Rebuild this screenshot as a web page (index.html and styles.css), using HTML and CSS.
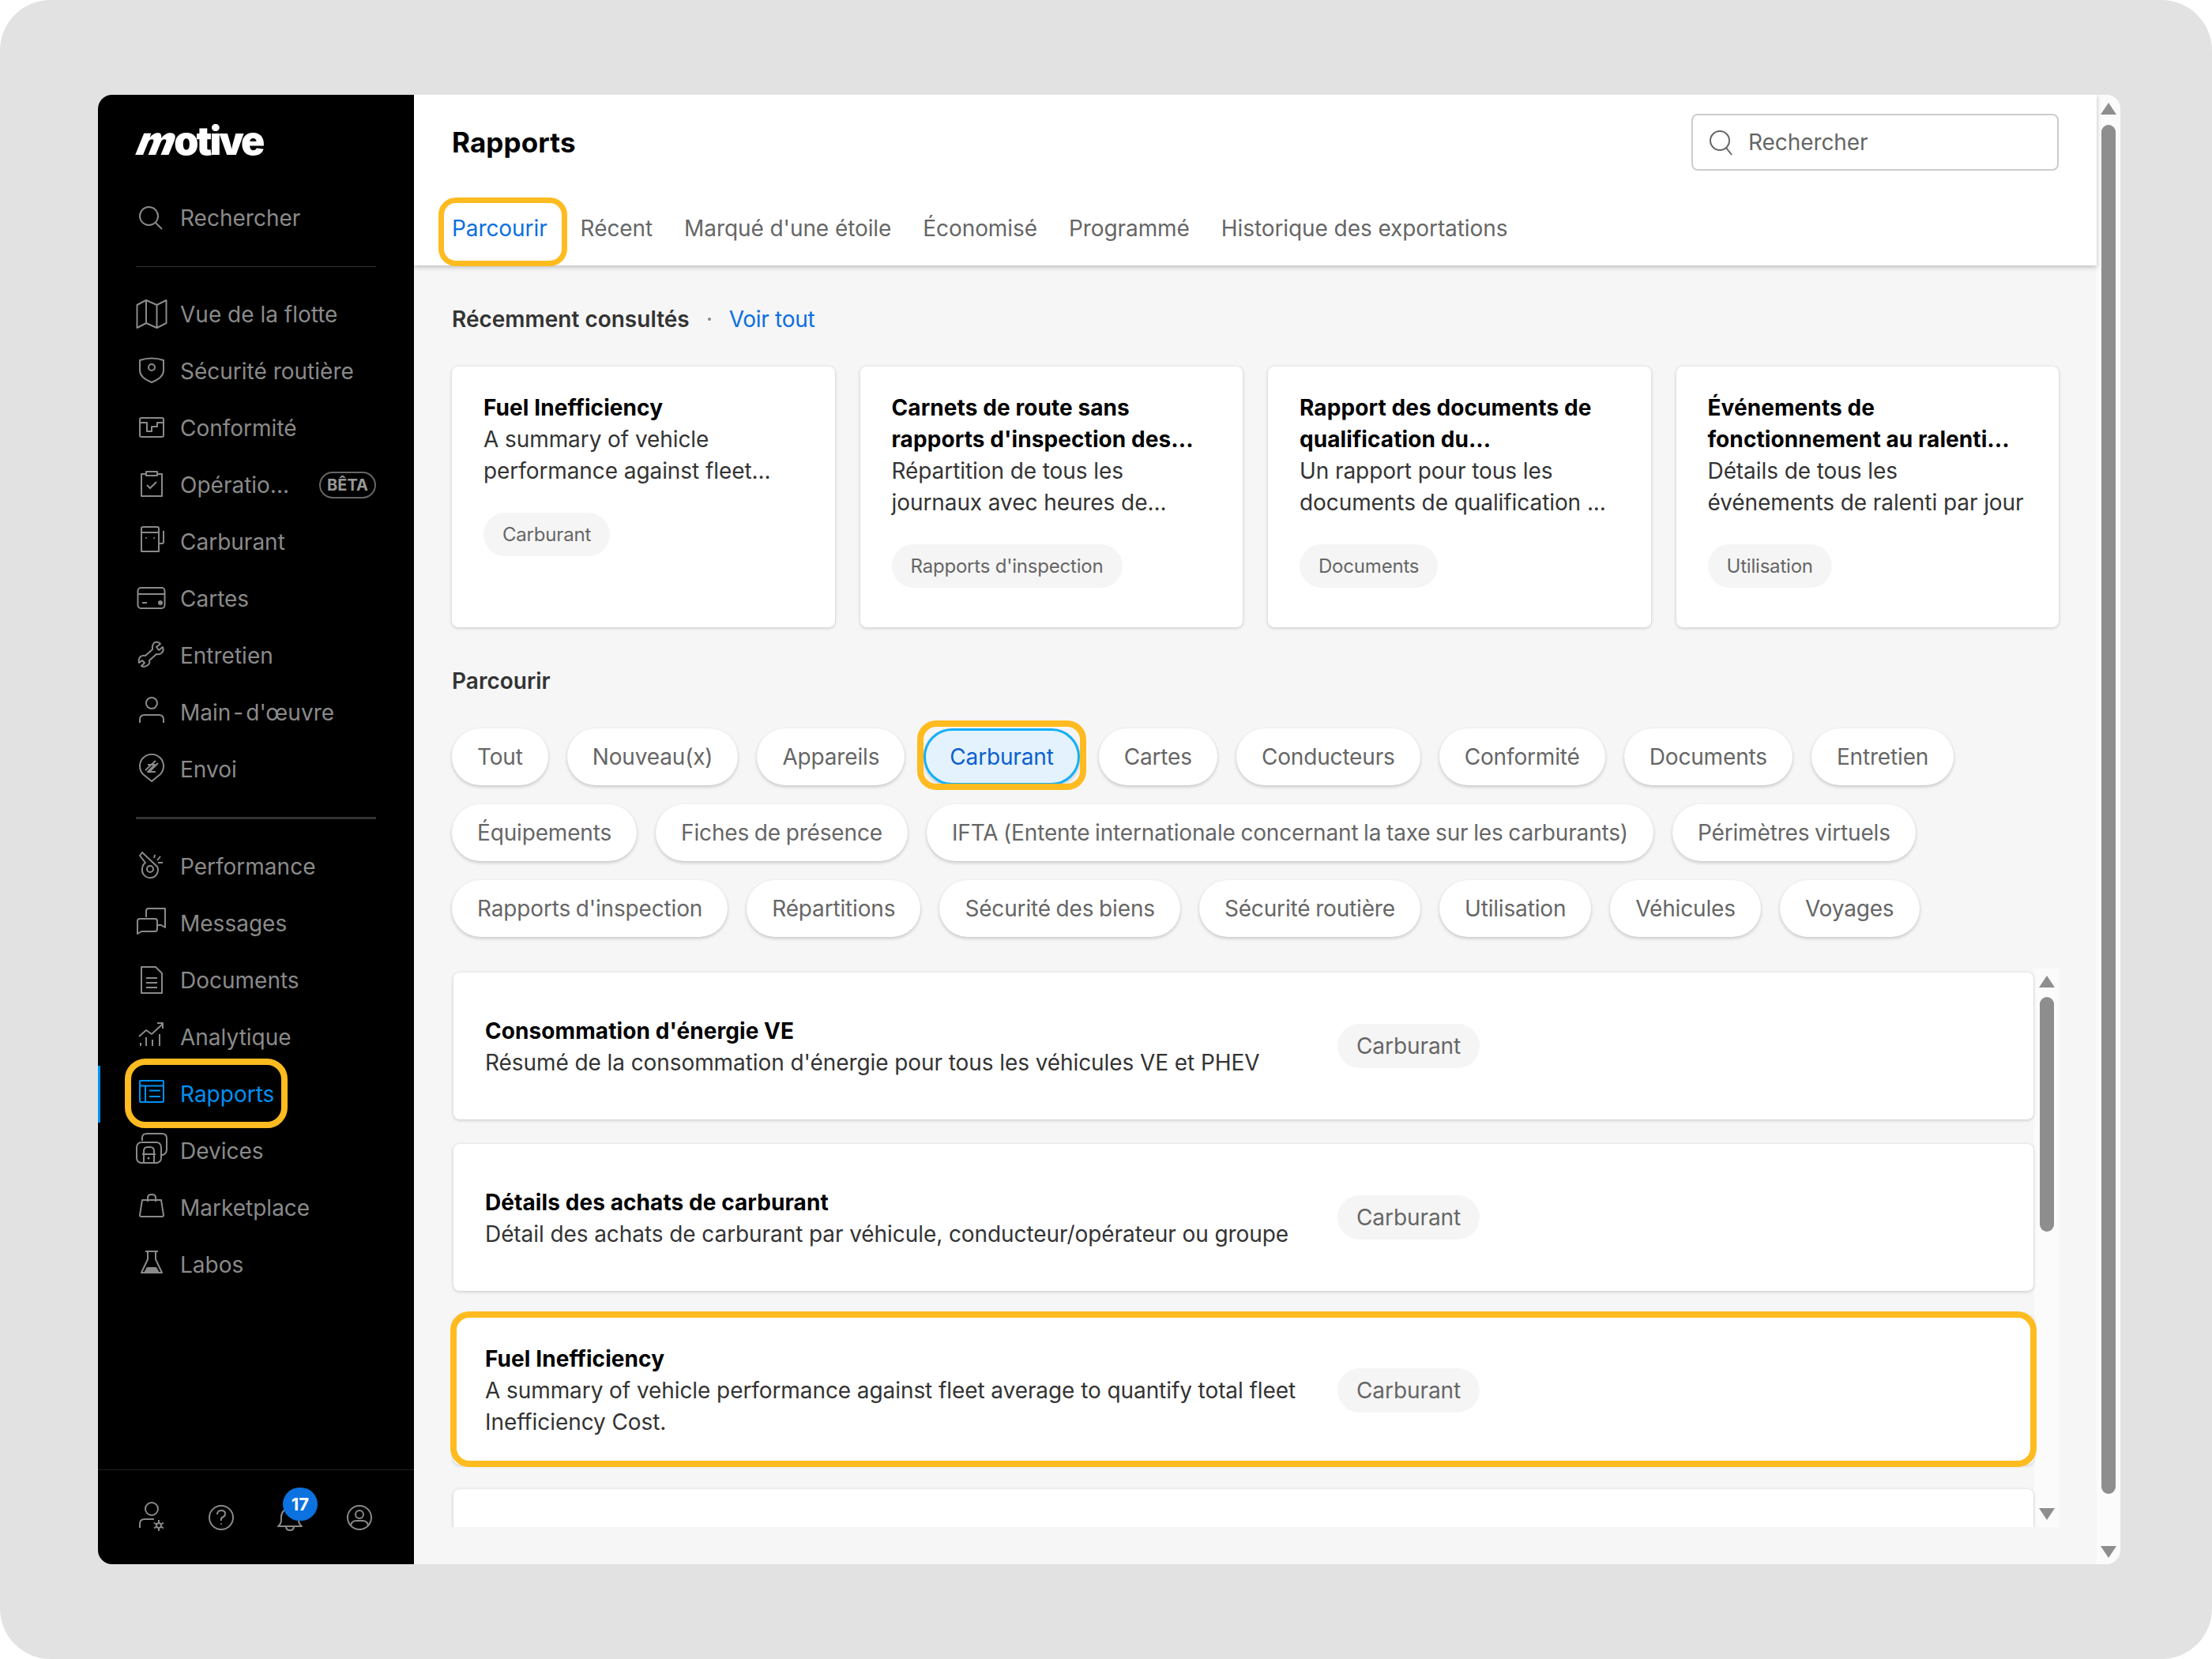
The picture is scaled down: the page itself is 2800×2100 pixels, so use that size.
FILE: index.html
```html
<!DOCTYPE html>
<html lang="fr">

<head>
    <meta charset="UTF-8">
    <title>Motive - Rapports</title>
    <link rel="stylesheet" href="styles.css">
</head>

<body>
    <div class="screen">
        <div class="app">
            <nav class="sidebar">
                <div class="logo"><span class="logo-m">m</span>otive</div>

                <div class="nav-item nav-search">
                    <svg class="icon" viewBox="0 0 40 40"><circle cx="16.5" cy="17.5" r="11.5"/><path d="M25 26l8 8"/></svg>
                    <span>Rechercher</span>
                </div>

                <div class="nav-divider"></div>

                <div class="nav-item">
                    <svg class="icon" viewBox="0 0 40 40"><path d="M1.5 8L13 2l13.500 6L38.500 2v29L26.500 37 13 31 1.500 37zM13 2v29M26.500 8v29"/></svg>
                    <span>Vue de la flotte</span>
                </div>
                <div class="nav-item">
                    <svg class="icon" viewBox="0 0 40 40"><path d="M5 6q15-5 30 0v13q0 9-15 15Q5 28 5 19z"/><circle cx="20" cy="15" r="4"/></svg>
                    <span>Sécurité routière</span>
                </div>
                <div class="nav-item">
                    <svg class="icon" viewBox="0 0 40 40"><rect x="5" y="7" width="30" height="24" rx="2"/><path d="M5 13h9v11h6v-6h7v-5h8"/></svg>
                    <span>Conformité</span>
                </div>
                <div class="nav-item">
                    <svg class="icon" viewBox="0 0 40 40"><path d="M13 6H7v28h26V6h-6"/><rect x="13" y="3" width="14" height="5"/><path d="M14 20l4 4 8-8"/></svg>
                    <span>Opératio...</span>
                    <span class="beta">BÊTA</span>
                </div>
                <div class="nav-item">
                    <svg class="icon" viewBox="0 0 40 40"><path d="M7 32V3q0-2 2-2h18q2 0 2 2v29zM7 8h22M29 22h4q2 0 2-2V6"/><circle cx="13" cy="15" r="1" class="solid"/><circle cx="23" cy="15" r="1" class="solid"/></svg>
                    <span>Carburant</span>
                </div>
                <div class="nav-item">
                    <svg class="icon" viewBox="0 0 40 40"><rect x="2.500" y="6" width="34" height="26" rx="4"/><path d="M2.500 14h34M8 25h6"/><circle cx="31" cy="25" r="3" class="solid"/></svg>
                    <span>Cartes</span>
                </div>
                <div class="nav-item">
                    <svg class="icon" viewBox="0 0 40 40"><path d="M24 3q5-1 7 2l-5 4 3 4 5-4q2 5-2 8-3 2-6 1l-9 8q1 4-2 6-4 3-8 1l4-4-3-3-4 3q-1-5 2-8 3-2 6-1l9-8q-1-6 3-9z"/></svg>
                    <span>Entretien</span>
                </div>
                <div class="nav-item">
                    <svg class="icon" viewBox="0 0 40 40"><circle cx="20" cy="8" r="7"/><path d="M5 33v-4q0-6 6-6h18q6 0 6 6v4"/></svg>
                    <span>Main<span class="hyphen">-</span>d'œuvre</span>
                </div>
                <div class="nav-item">
                    <svg class="icon" viewBox="0 0 40 40"><path d="M20 35L9 26a15 15 0 1 1 22 0z"/><path d="M12 21L25 9M15 14h9l-9 9h10M28 12L16 24"/></svg>
                    <span>Envoi</span>
                </div>

                <div class="nav-divider nav-divider-thick"></div>

                <div class="nav-item">
                    <svg class="icon" viewBox="0 0 40 40"><path d="M8 2l-3 4 7 9q-4 3-4 8a10 10 0 1 0 19-3L8 2z"/><circle cx="18" cy="23" r="4"/><path d="M24 5l-1 4M31 7l-4 5M34 15h-6"/></svg>
                    <span>Performance</span>
                </div>
                <div class="nav-item">
                    <svg class="icon" viewBox="0 0 40 40"><path d="M13 12V4q0-3 3-3h21v24l-5-3h-5"/><path d="M2 33V17q0-3 3-3h19q3 0 3 3v10q0 3-3 3H7z"/></svg>
                    <span>Messages</span>
                </div>
                <div class="nav-item">
                    <svg class="icon" viewBox="0 0 40 40"><path d="M7 3h18l8 8v25H7zM13 17h14M13 23h14M13 29h14"/></svg>
                    <span>Documents</span>
                </div>
                <div class="nav-item">
                    <svg class="icon" viewBox="0 0 40 40"><path d="M4 19l9-8 7 5L34 3M27 2h7v7M6 27v4M13 20v11M21 23v8M30 16v15"/></svg>
                    <span>Analytique</span>
                </div>
                <div class="nav-item nav-active">
                    <svg class="icon" viewBox="0 0 40 40"><rect x="5" y="3" width="30" height="27" rx="1"/><path d="M5 9.500h30M12 9.500V30M17 15.500h14M17 23h14"/></svg>
                    <span>Rapports</span>
                    <span class="nav-bar"></span>
                    <span class="mark mark-nav"></span>
                </div>
                <div class="nav-item">
                    <svg class="icon icon-over" viewBox="0 0 40 40"><path d="M8 7V3q0-5 6-5h19q6 0 6 6v14q0 5-5 7h-2"/><rect x="1" y="9" width="31" height="26" rx="6"/><path d="M10 35V20q0-5 5-5h3q5 0 5 5v15M8 24h17"/><circle cx="16" cy="29" r="1.500" class="solid"/></svg>
                    <span>Devices</span>
                </div>
                <div class="nav-item">
                    <svg class="icon" viewBox="0 0 40 40"><path d="M8 10h24l3 19q0 2-2 2H7q-2 0-2-2zM15 12V7q0-4 5-4t5 4v5"/></svg>
                    <span>Marketplace</span>
                </div>
                <div class="nav-item">
                    <svg class="icon" viewBox="0 0 40 40"><path d="M12 3h16M15 3v10L7 30h26l-8-17V3"/><path d="M14 23h12l4 7H10z" class="solid"/></svg>
                    <span>Labos</span>
                </div>

                <div class="side-foot">
                    <svg class="icon" viewBox="0 0 40 40"><circle cx="20" cy="9" r="8"/><path d="M5 33v-5q0-6 6-6h12"/><circle cx="29" cy="30" r="3"/><path d="M29 23v3M29 34v3M23 26.500l3 2M32 31.500l3 2M23 33.500l3-2M32 28.500l3-2"/></svg>
                    <svg class="icon" viewBox="0 0 40 40"><circle cx="20" cy="20" r="15"/><path d="M15 16q0-5 5-5t5 4q0 3-3 4.500t-2 4.500"/><circle cx="20" cy="28" r="1" class="solid"/></svg>
                    <span class="bell">
                        <svg class="icon" viewBox="0 0 40 40"><path d="M5 31q4-3 4-8v-4a11 11 0 0 1 22 0v4q0 5 4 8zM15 31q0 5 5 5t5-5"/></svg>
                        <span class="badge">17</span>
                    </span>
                    <svg class="icon" viewBox="0 0 40 40"><circle cx="20" cy="20" r="15"/><circle cx="20" cy="16" r="5"/><path d="M9 30q1-6 7-6h8q6 0 7 6"/></svg>
                </div>
            </nav>

            <div class="main">
                <div class="main-col">
                    <header class="page-head">
                        <div class="head-row">
                            <h1>Rapports</h1>
                            <div class="search-box">
                                <svg class="icon" viewBox="0 0 40 40"><circle cx="18" cy="18" r="12"/><path d="M26 27l7 9"/></svg>
                                <span>Rechercher</span>
                            </div>
                        </div>
                        <div class="tabs">
                            <span class="tab tab-active">Parcourir<span class="mark mark-tab"></span></span>
                            <span class="tab">Récent</span>
                            <span class="tab">Marqué d'une étoile</span>
                            <span class="tab">Économisé</span>
                            <span class="tab">Programmé</span>
                            <span class="tab">Historique des exportations</span>
                        </div>
                    </header>

                    <section class="content">
                        <div class="section-title">
                            <strong>Récemment consultés</strong>
                            <span class="dot"></span>
                            <a href="#">Voir tout</a>
                        </div>

                        <div class="recent-cards">
                            <div class="recent-card">
                                <h3>Fuel Inefficiency</h3>
                                <p>A summary of vehicle<br>performance against fleet...</p>
                                <span class="tag">Carburant</span>
                            </div>
                            <div class="recent-card">
                                <h3>Carnets de route sans<br>rapports d'inspection des...</h3>
                                <p>Répartition de tous les<br>journaux avec heures de...</p>
                                <span class="tag">Rapports d'inspection</span>
                            </div>
                            <div class="recent-card">
                                <h3>Rapport des documents de<br>qualification du...</h3>
                                <p>Un rapport pour tous les<br>documents de qualification ...</p>
                                <span class="tag">Documents</span>
                            </div>
                            <div class="recent-card">
                                <h3>Événements de<br>fonctionnement au ralenti...</h3>
                                <p>Détails de tous les<br>événements de ralenti par jour</p>
                                <span class="tag">Utilisation</span>
                            </div>
                        </div>

                        <div class="section-title section-browse"><strong>Parcourir</strong></div>

                        <div class="pills">
                            <span class="pill">Tout</span>
                            <span class="pill">Nouveau(x)</span>
                            <span class="pill">Appareils</span>
                            <span class="pill pill-on">Carburant<span class="mark mark-pill"></span></span>
                            <span class="pill">Cartes</span>
                            <span class="pill">Conducteurs</span>
                            <span class="pill">Conformité</span>
                            <span class="pill">Documents</span>
                            <span class="pill">Entretien</span>
                            <span class="pill">Équipements</span>
                            <span class="pill">Fiches de présence</span>
                            <span class="pill">IFTA (Entente internationale concernant la taxe sur les carburants)</span>
                            <span class="pill">Périmètres virtuels</span>
                            <span class="pill">Rapports d'inspection</span>
                            <span class="pill">Répartitions</span>
                            <span class="pill">Sécurité des biens</span>
                            <span class="pill">Sécurité routière</span>
                            <span class="pill">Utilisation</span>
                            <span class="pill">Véhicules</span>
                            <span class="pill">Voyages</span>
                        </div>

                        <div class="report-list">
                            <div class="report-items">
                                <div class="report-card">
                                    <div class="report-text">
                                        <h3>Consommation d'énergie VE</h3>
                                        <p>Résumé de la consommation d'énergie pour tous les véhicules VE et PHEV</p>
                                    </div>
                                    <span class="tag tag-big">Carburant</span>
                                </div>
                                <div class="report-card">
                                    <div class="report-text">
                                        <h3>Détails des achats de carburant</h3>
                                        <p>Détail des achats de carburant par véhicule, conducteur/opérateur ou groupe</p>
                                    </div>
                                    <span class="tag tag-big">Carburant</span>
                                </div>
                                <div class="report-card">
                                    <div class="report-text">
                                        <h3>Fuel Inefficiency</h3>
                                        <p>A summary of vehicle performance against fleet average to quantify total fleet Inefficiency Cost.</p>
                                    </div>
                                    <span class="tag tag-big">Carburant</span>
                                    <span class="mark mark-card"></span>
                                </div>
                                <div class="report-card"></div>
                            </div>
                            <div class="scrollbar scrollbar-inner">
                                <span class="arrow-up"></span>
                                <span class="thumb"></span>
                                <span class="arrow-down"></span>
                            </div>
                        </div>
                    </section>
                </div>

                <div class="scrollbar scrollbar-main">
                    <span class="arrow-up"></span>
                    <span class="thumb"></span>
                    <span class="arrow-down"></span>
                </div>
            </div>
        </div>
    </div>
</body>

</html>
```

FILE: styles.css
```css
* {
    margin: 0;
    padding: 0;
    box-sizing: border-box;
}

body {
    background: #fff;
    font-family: 'Inter', 'Liberation Sans', sans-serif;
    font-size: 28px;
    letter-spacing: -0.08px;
    line-height: 40px;
    color: #333;
}

.screen {
    width: 2800px;
    height: 2100px;
    background: #e2e2e2;
    border-radius: 64px;
    padding: 120px 116px 120px 124px;
}

.app {
    display: flex;
    height: 1860px;
    border-radius: 18px;
    overflow: hidden;
}

/* Sidebar */
.sidebar {
    width: 400px;
    flex: none;
    background: #000;
    color: #8a8a8a;
    display: flex;
    flex-direction: column;
    letter-spacing: 0;
}

.logo {
    height: 120px;
    padding: 26px 0 0 52px;
    color: #fff;
    font-size: 50px;
    line-height: 64px;
    font-weight: 900;
    letter-spacing: -3px;
}

.logo-m {
    display: inline-block;
    transform: skewX(-22deg);
}

.nav-item {
    position: relative;
    height: 72px;
    flex: none;
    display: flex;
    align-items: center;
    gap: 16px;
    padding: 0 48px;
}

.icon {
    width: 40px;
    height: 40px;
    flex: none;
    fill: none;
    stroke: currentColor;
    stroke-width: 2;
    stroke-linejoin: round;
}

.icon .solid {
    fill: currentColor;
    stroke: none;
}

.icon-over {
    overflow: visible;
}

.hyphen {
    margin: 0 3px;
}

.nav-divider {
    height: 1px;
    margin: 25px 48px 24px;
    background: #333;
}

.nav-divider-thick {
    height: 3px;
    margin: 24px 48px;
}

.beta {
    margin-left: auto;
    padding: 0 8px;
    height: 34px;
    border: 2px solid #666;
    border-radius: 17px;
    color: #999;
    font-size: 20px;
    line-height: 30px;
    font-weight: 700;
}

.nav-active {
    color: #0091f2;
}

.nav-bar {
    position: absolute;
    left: 0;
    top: 0;
    width: 3px;
    height: 72px;
    background: #0091f2;
}

/* yellow callouts lying over the ui */
.mark {
    position: absolute;
    border: 8px solid #ffbb1f;
    z-index: 2;
    pointer-events: none;
}

.mark-nav {
    left: 34px;
    top: -9px;
    width: 206px;
    height: 88px;
    border-radius: 26px;
}

.mark-tab {
    left: -17px;
    top: 10px;
    right: -25px;
    bottom: -1px;
    border-width: 7px;
    border-radius: 22px;
}

.mark-pill {
    left: -11px;
    top: -13px;
    right: -11px;
    bottom: -9px;
    border-radius: 24px;
}

.mark-card {
    left: -4px;
    top: -5px;
    right: -4px;
    bottom: -3px;
    border-radius: 24px;
}

.side-foot {
    margin-top: auto;
    height: 120px;
    border-top: 1px solid #222;
    display: flex;
    align-items: center;
    gap: 47.500px;
    padding-left: 48px;
}

.bell {
    position: relative;
    width: 40px;
    height: 40px;
}

.badge {
    position: absolute;
    left: 11px;
    top: -18px;
    width: 44px;
    height: 42px;
    border-radius: 21px;
    background: #0b72e0;
    color: #fff;
    font-size: 22px;
    line-height: 42px;
    font-weight: 700;
    text-align: center;
}

/* Main */
.main {
    flex: 1;
    display: flex;
    background: #f6f6f6;
}

.main-col {
    flex: 1;
    min-width: 0;
}

.page-head {
    position: relative;
    height: 216px;
    padding: 24px 48px 0;
    background: #fff;
    box-shadow: 0 2px 6px rgba(0, 0, 0, 0.25);
}

.head-row {
    display: flex;
    justify-content: space-between;
    align-items: center;
    height: 72px;
}

h1 {
    font-size: 35px;
    font-weight: 700;
    letter-spacing: 0.1px;
    color: #000;
}

.search-box {
    width: 465px;
    height: 72px;
    display: flex;
    align-items: center;
    gap: 14px;
    padding: 0 16px;
    border: 2px solid #ccc;
    border-radius: 8px;
    color: #666;
}

.tabs {
    display: flex;
    gap: 40px;
    margin-top: 24px;
}

.tab {
    position: relative;
    height: 96px;
    line-height: 98px;
    color: #666;
}

.tab-active {
    margin-right: 2px;
    color: #0b6fe0;
}

.content {
    padding: 48px 48px 0;
}

.section-title {
    display: flex;
    align-items: center;
    height: 40px;
}

.section-title strong {
    font-weight: 600;
    letter-spacing: 0;
}

.section-title a {
    color: #0b6fe0;
    letter-spacing: -0.3px;
    text-decoration: none;
}

.dot {
    width: 4px;
    height: 4px;
    margin: 0 23px;
    border-radius: 50%;
    background: #888;
}

.section-browse {
    margin-top: 48px;
}

.recent-cards {
    display: grid;
    grid-template-columns: repeat(4, 1fr);
    gap: 32px;
    margin-top: 40px;
    height: 330px;
}

.recent-card {
    padding: 32px 40px 0;
    background: #fff;
    border-radius: 8px;
    box-shadow: 0 1px 4px rgba(0, 0, 0, 0.2);
}

h3 {
    font-size: 28px;
    font-weight: 700;
    letter-spacing: 0.08px;
    color: #000;
}

.tag {
    display: inline-block;
    margin-top: 33px;
    padding: 0 24px;
    height: 55px;
    border-radius: 28px;
    background: #f5f5f5;
    color: #666;
    font-size: 24px;
    letter-spacing: -0.2px;
    line-height: 55px;
}

.tag-big {
    margin-top: 0;
    height: 56px;
    font-size: 28px;
    letter-spacing: -0.08px;
    line-height: 56px;
}

.pills {
    display: flex;
    flex-wrap: wrap;
    gap: 24px;
    margin-top: 40px;
    letter-spacing: -0.16px;
    word-spacing: -1px;
}

.pill {
    position: relative;
    height: 72px;
    padding: 0 32px;
    border-radius: 36px;
    background: #fff;
    color: #666;
    line-height: 72px;
    box-shadow: 0 2px 4px rgba(0, 0, 0, 0.2);
}

.pill-on {
    background: #e3f2fd;
    border: 3px solid #14b0f5;
    padding: 0 30px;
    color: #0a5fd0;
    line-height: 66px;
}

.report-list {
    display: flex;
    height: 707px;
    margin: 40px 0 0 -6px;
}

.report-items {
    flex: 1;
    min-width: 0;
    overflow: hidden;
    padding: 5px 9px 0 8px;
}

.report-card {
    position: relative;
    display: flex;
    align-items: center;
    min-height: 186px;
    margin-bottom: 31px;
    padding: 34px 40px;
    background: #fff;
    border-radius: 8px;
    box-shadow: 0 1px 4px rgba(0, 0, 0, 0.2);
}

.report-text {
    width: 1040px;
    margin-right: 39px;
    padding-top: 1px;
}

/* Scrollbars */
.scrollbar {
    display: flex;
    flex-direction: column;
    align-items: center;
    flex: none;
    background: #fbfbfb;
}

.scrollbar-inner {
    width: 31px;
    margin-left: -8px;
    padding: 9px 0;
}

.scrollbar-main {
    width: 30px;
    padding: 10px 0 8px;
}

.thumb {
    width: 18px;
    margin: 13px 0;
    border-radius: 9px;
    background: #8e8e8e;
}

.scrollbar-inner .thumb {
    height: 297px;
    margin: 12px 0 auto;
}

.scrollbar-main .thumb {
    flex: 1;
    margin: 13px 0 66px;
}

.arrow-up,
.arrow-down {
    width: 0;
    height: 0;
    border-left: 10px solid transparent;
    border-right: 10px solid transparent;
}

.arrow-up {
    border-bottom: 15px solid #8e8e8e;
}

.arrow-down {
    border-top: 15px solid #8e8e8e;
}
```
